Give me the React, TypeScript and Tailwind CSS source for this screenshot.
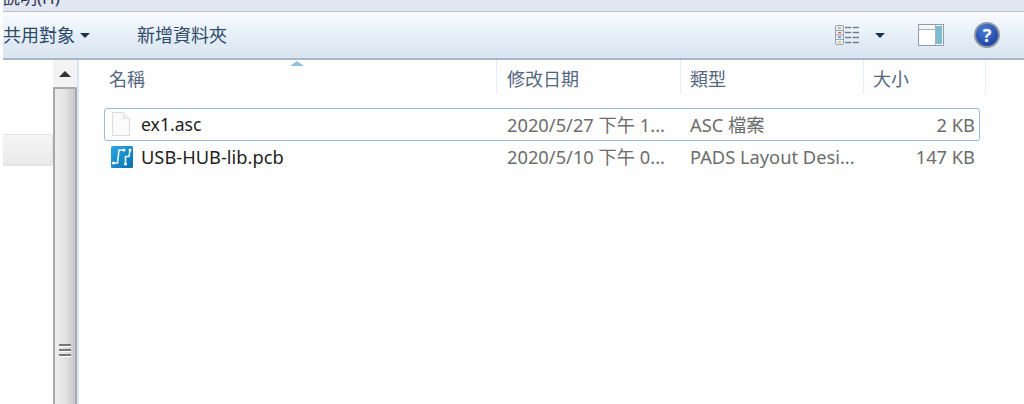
import { Fragment } from 'react'

const font = { fontFamily: '"Noto Sans", "Noto Sans CJK TC", sans-serif' }

const columns = [
  { label: '名稱', width: 'w-[418px]', pad: 'pl-[30px]' },
  { label: '修改日期', width: 'w-[184px]', pad: 'pl-[10px]' },
  { label: '類型', width: 'w-[183px]', pad: 'pl-[9px]' },
  { label: '大小', width: 'w-[122px]', pad: 'pl-[9px]' },
]

const files = [
  { name: 'ex1.asc', date: '2020/5/27 下午 1...', type: 'ASC 檔案', size: '2 KB', icon: 'doc', selected: true },
  { name: 'USB-HUB-lib.pcb', date: '2020/5/10 下午 0...', type: 'PADS Layout Desi...', size: '147 KB', icon: 'pcb', selected: false },
]

function DocIcon() {
  return (
    <svg width="22" height="26" viewBox="0 0 22 26">
      <path d="M2.5 1.5h11l6 6v17h-17z" fill="#fbfbfb" stroke="#dcdcdc" />
      <path d="M13.5 1.5v6h6" fill="#f1f1f1" stroke="#e2e2e2" />
    </svg>
  )
}

function PcbIcon() {
  return (
    <svg width="24" height="24" viewBox="0 0 24 24">
      <defs>
        <linearGradient id="pcb" x1="0" y1="0" x2="1" y2="1">
          <stop offset="0" stopColor="#2aa8e4" />
          <stop offset="1" stopColor="#0a6fb0" />
        </linearGradient>
      </defs>
      <rect x="1" y="1" width="22" height="22" rx="1.5" fill="url(#pcb)" />
      <path d="M3 18h4.5L9 5h5" fill="none" stroke="#e8f6fd" strokeWidth="1.6" />
      <path d="M20 5l-1 6.5h-3.5V19" fill="none" stroke="#e8f6fd" strokeWidth="1.6" />
      <circle cx="3.5" cy="18" r="1.5" fill="#fff" />
      <circle cx="14" cy="5" r="1.5" fill="#fff" />
      <circle cx="20" cy="5" r="1.5" fill="#fff" />
      <circle cx="15.5" cy="19" r="1.5" fill="#fff" />
    </svg>
  )
}

function DetailsIcon() {
  return (
    <svg width="24" height="20" viewBox="0 0 24 20">
      <rect x="0.5" y="0.5" width="8" height="19" rx="1.5" fill="#eef0f3" stroke="#98a3af" />
      <path d="M0.5 5.5h8M0.5 10h8M0.5 14.5h8" stroke="#98a3af" />
      <path d="M3 3h3" stroke="#7fb56a" strokeWidth="1.4" />
      <path d="M3 7.8h3" stroke="#e0564a" strokeWidth="1.4" />
      <path d="M3 12.2h3" stroke="#4d87d6" strokeWidth="1.4" />
      <path d="M3 17h3" stroke="#b7c74f" strokeWidth="1.4" />
      {[2.5, 7.5, 12.5, 17.5].map((y) => (
        <Fragment key={y}>
          <path d={`M10 ${y}h6`} stroke="#6f7b88" strokeWidth="1.4" />
          <path d={`M17.5 ${y}h6.5`} stroke="#6f7b88" strokeWidth="1.4" />
        </Fragment>
      ))}
    </svg>
  )
}

function PreviewIcon() {
  return (
    <svg width="26" height="22" viewBox="0 0 26 22">
      <rect x="0.5" y="0.5" width="25" height="21" fill="#f4f6f8" stroke="#8f9dac" />
      <rect x="2" y="6" width="15" height="14" fill="#fff" />
      <rect x="18" y="2" width="6" height="18" fill="#7dbccf" />
      <path d="M1 5.5h16M17.5 1v20" stroke="#a6b2be" />
    </svg>
  )
}

function HelpIcon() {
  return (
    <div className="flex h-[26px] w-[26px] items-center justify-center rounded-full border-2 border-[#8c96a3] bg-[radial-gradient(circle_at_40%_30%,#4a7fd8,#12318f)]">
      <span className="text-[18px] font-bold leading-none text-white">?</span>
    </div>
  )
}

function Caret() {
  return <div className="h-0 w-0 border-x-[5px] border-t-[5px] border-x-transparent border-t-[#1c3150]" />
}

export default function App() {
  return (
    <div className="flex h-[404px] w-[1024px] flex-col overflow-hidden bg-white pl-[3px]" style={font}>
      <div className="h-[12px] shrink-0 overflow-hidden border-b border-[#b4bfcf] bg-[#e3e7f2]">
        <div className="-mt-[14px] text-[17px] leading-[24px] text-[#2a3550]">說明(H)</div>
      </div>

      <div className="flex h-[48px] shrink-0 items-center border-b-2 border-[#a9b8c9] bg-gradient-to-b from-[#fafcfe] via-[#e6eff8] to-[#d9e5f1] text-[18px] text-[#2f4a6a]">
        <div className="flex items-center gap-[5px]">
          <span>共用對象</span>
          <Caret />
        </div>
        <span className="ml-[47px]">新增資料夾</span>
        <div className="ml-auto flex items-center pr-[24px]">
          <DetailsIcon />
          <div className="ml-[16px]">
            <Caret />
          </div>
          <div className="ml-[33px]">
            <PreviewIcon />
          </div>
          <div className="ml-[30px]">
            <HelpIcon />
          </div>
        </div>
      </div>

      <div className="flex min-h-0 flex-1">
        <div className="w-[50px] shrink-0 pt-[74px]">
          <div className="h-[32px] rounded-r-[3px] border border-l-0 border-[#e3e3e3] bg-gradient-to-b from-[#f6f6f6] to-[#e9e9e9]" />
        </div>

        <div className="flex w-[24px] shrink-0 flex-col bg-[#f3f3f3]">
          <div className="flex h-[27px] shrink-0 items-center justify-center">
            <div className="h-0 w-0 border-x-[6px] border-b-[6px] border-x-transparent border-b-[#333]" />
          </div>
          <div className="flex flex-1 flex-col items-center rounded-t-[2px] border-x-2 border-t-2 border-[#a8a8a8] bg-gradient-to-r from-[#ececec] via-[#e4e4e4] to-[#c8c8c8] pt-[255px]">
            <div className="flex w-[12px] flex-col gap-[2px]">
              <div className="h-[3px] border-t-2 border-t-[#777] bg-white" />
              <div className="h-[3px] border-t-2 border-t-[#777] bg-white" />
              <div className="h-[3px] border-t-2 border-t-[#777] bg-white" />
            </div>
          </div>
        </div>
        <div className="w-[2px] shrink-0 bg-[#dbe6f5]" />

        <div className="relative flex min-w-0 flex-1 flex-col bg-[#fefefe]">
          <div className="absolute left-[211px] top-[1px] h-0 w-0 border-x-[7px] border-b-[5px] border-x-transparent border-b-[#8fc3e4]" />
          <div className="flex h-[37px] shrink-0">
            {columns.map((c) => (
              <div
                key={c.label}
                className={`${c.width} ${c.pad} h-[34px] shrink-0 border-r border-[#e6edf5] pt-[7px] text-[18px] leading-[24px] text-[#53677f]`}
              >
                {c.label}
              </div>
            ))}
          </div>

          <div className="ml-[25px] mt-[11px] flex w-[876px] flex-col text-[18.3px]">
            {files.map((f) => (
              <div
                key={f.name}
                className={`flex items-center rounded-[3px] border ${f.selected ? 'h-[33px] border-[#9dbcdc]' : 'h-[31px] border-transparent'}`}
              >
                <div className="flex w-[393px] shrink-0 items-center pl-[5px]">
                  <div className="flex w-[31px] shrink-0 items-center justify-start">
                    {f.icon === 'doc' ? <DocIcon /> : <PcbIcon />}
                  </div>
                  <span className={f.selected ? 'text-[17.6px] text-[#1f1f1f]' : 'text-[#1f1f1f]'}>{f.name}</span>
                </div>
                <div className="w-[184px] shrink-0 whitespace-nowrap pl-[9px] text-[#6d6d6d]">{f.date}</div>
                <div className="w-[170px] shrink-0 whitespace-nowrap pl-[8px] text-[#6d6d6d]">{f.type}</div>
                <div className="flex-1 whitespace-nowrap pr-[4px] text-right text-[#6d6d6d]">{f.size}</div>
              </div>
            ))}
          </div>
        </div>
      </div>
    </div>
  )
}
